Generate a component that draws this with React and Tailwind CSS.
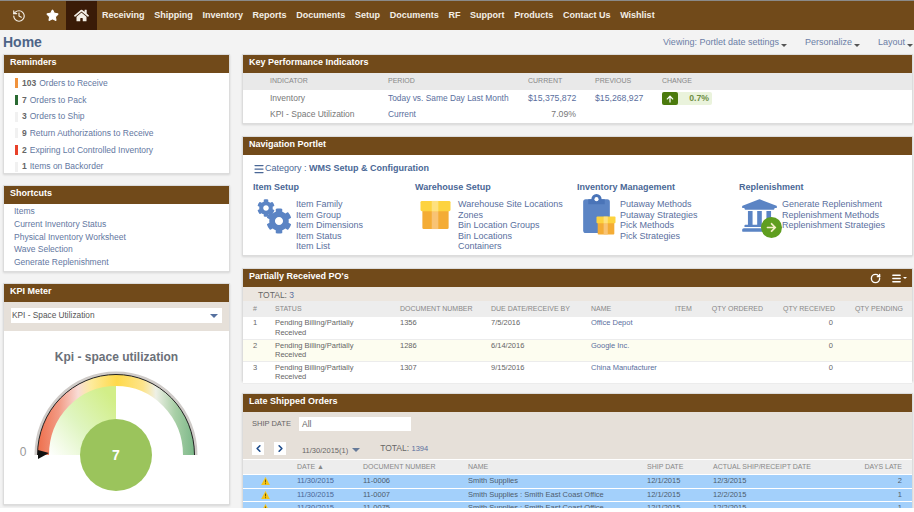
import { History, Star, RotateCw, Menu, ChevronLeft, ChevronRight } from "lucide-react";
import { FaHome, FaCog, FaUniversity, FaArrowUp, FaArrowRight } from "react-icons/fa";

const navItems = ["Receiving", "Shipping", "Inventory", "Reports", "Documents", "Setup", "Documents", "RF", "Support", "Products", "Contact Us", "Wishlist"];

const reminders = [
  { count: 103, label: "Orders to Receive", bar: "bg-[#f0923c]" },
  { count: 7, label: "Orders to Pack", bar: "bg-[#2a6a32]" },
  { count: 3, label: "Orders to Ship", bar: "bg-[#f1f1f1]" },
  { count: 9, label: "Return Authorizations to Receive", bar: "bg-[#f1f1f1]" },
  { count: 2, label: "Expiring Lot Controlled Inventory", bar: "bg-[#e8412a]" },
  { count: 1, label: "Items on Backorder", bar: "bg-[#f1f1f1]" },
];

const shortcuts = ["Items", "Current Inventory Status", "Physical Inventory Worksheet", "Wave Selection", "Generate Replenishment"];

const poRows = [
  { id: 1, doc: "1356", due: "7/5/2016", name: "Office Depot", bg: "bg-white" },
  { id: 2, doc: "1286", due: "6/14/2016", name: "Google Inc.", bg: "bg-[#fdfdf0]" },
  { id: 3, doc: "1307", due: "9/15/2016", name: "China Manufacturer", bg: "bg-white" },
];

const lateRows = [
  { doc: "11-0006", name: "Smith Supplies", ship: "12/1/2015", actual: "12/3/2015", days: 2 },
  { doc: "11-0007", name: "Smith Supplies : Smith East Coast Office", ship: "12/1/2015", actual: "12/2/2015", days: 1 },
  { doc: "11-0075", name: "Smith Supplies : Smith East Coast Office", ship: "12/1/2015", actual: "12/2/2015", days: 1 },
];

function Panel({ title, right, className = "", children }) {
  return (
    <section className={`border border-[#dcdcdc] bg-white shadow-[0_1px_2px_rgba(0,0,0,0.12)] ${className}`}>
      <div className="flex h-[18px] items-center justify-between bg-[#714a1a] pb-[2px] pl-[6px] pr-[4px] text-[9px] font-bold text-white">
        <span>{title}</span>
        {right}
      </div>
      {children}
    </section>
  );
}

function Box({ className = "" }) {
  return (
    <svg viewBox="0 0 32 32" className={className}>
      <rect x="2" y="10" width="28" height="21" rx="1.5" fill="#f4ac35" />
      <rect x="12" y="10" width="7" height="21" fill="#f8c374" />
      <rect x="0" y="1" width="32" height="11" rx="1.5" fill="#fdd33f" />
      <rect x="12" y="1" width="7" height="11" fill="#fee17f" />
    </svg>
  );
}

function NavGroup({ title, icon, links, width }) {
  return (
    <div className={width}>
      <p className="text-[9px] font-bold text-[#4a6796]">{title}</p>
      <div className="mt-[5px] flex">
        <div className="w-[43px] shrink-0">{icon}</div>
        <ul className="text-[9px] leading-[10.5px] text-[#5a6f9e]">
          {links.map((l) => (
            <li key={l} className="whitespace-nowrap">{l}</li>
          ))}
        </ul>
      </div>
    </div>
  );
}

function Gauge() {
  return (
    <svg viewBox="3 33 226 150" className="block h-[150px] w-[226px]">
      <defs>
        <linearGradient id="band" gradientUnits="userSpaceOnUse" x1="35" y1="0" x2="197" y2="0">
          <stop offset="0" stopColor="#ee6c48" />
          <stop offset="0.14" stopColor="#f29a84" />
          <stop offset="0.26" stopColor="#f9dcd6" />
          <stop offset="0.34" stopColor="#fdeb9c" />
          <stop offset="0.5" stopColor="#ffd94a" />
          <stop offset="0.66" stopColor="#fde48a" />
          <stop offset="0.74" stopColor="#eef0e6" />
          <stop offset="0.86" stopColor="#a8cfa6" />
          <stop offset="1" stopColor="#73b383" />
        </linearGradient>
        <linearGradient id="wedge" gradientUnits="userSpaceOnUse" x1="50" y1="125" x2="115" y2="70">
          <stop offset="0" stopColor="#ffffff" />
          <stop offset="0.5" stopColor="#dff5c0" />
          <stop offset="1" stopColor="#d2ee88" />
        </linearGradient>
      </defs>
      <path d="M115 122 L47 122 A68 70 0 0 1 115 52 Z" fill="url(#wedge)" />
      <path d="M42 122 A73 75 0 0 1 188 122" fill="none" stroke="url(#band)" strokeWidth="12" />
      <path d="M35 122 A80 82 0 0 1 195 122" fill="none" stroke="#cfcbc8" strokeWidth="3" />
      <path d="M36.500 122 A78.500 80.500 0 0 1 193.500 122" fill="none" stroke="#222" strokeWidth="1" />
      <path d="M36 125 L47 119 L36 116 Z" fill="#111" transform="translate(1 1)" />
      <circle cx="115" cy="122" r="36" fill="#9bc45c" />
      <text x="115" y="127" textAnchor="middle" fontSize="14" fontWeight="700" fill="#fff">7</text>
      <text x="22" y="123" textAnchor="middle" fontSize="12" fill="#999">0</text>
    </svg>
  );
}

export default function App() {
  return (
    <div className="h-[508px] overflow-hidden bg-[#f3f3f3] font-['Liberation_Sans',Arial,sans-serif] text-[#666]">
      <nav className="flex h-[30px] items-center border-t border-[#8a8a8a] bg-[#714a1a] text-[9px] font-bold text-[#f4efe6]">
        <span className="flex h-full w-[38px] items-center justify-center"><History size={14} strokeWidth={2} /></span>
        <span className="flex h-full w-[28px] items-center justify-center"><Star size={13} fill="white" stroke="white" /></span>
        <span className="flex h-full w-[31px] items-center justify-center bg-[#3a1b07]"><FaHome size={15} className="text-[#f4efe6]" /></span>
        <ul className="ml-[5px] flex gap-[9.700px]">
          {navItems.map((n, i) => (
            <li key={n + i} className="whitespace-nowrap">{n}</li>
          ))}
        </ul>
      </nav>

      <header className="flex h-[24px] items-center justify-between pl-[3px] pr-[1px]">
        <h1 className="text-[14px] font-bold text-[#4d6487]">Home</h1>
        <div className="mt-[2px] flex gap-[18px] text-[9px] text-[#6b7ea6]">
          <span>Viewing: Portlet date settings<Caret /></span>
          <span>Personalize<Caret /></span>
          <span>Layout<Caret /></span>
        </div>
      </header>

      <main className="flex gap-[12px] pl-[3px] pr-[1px]">
        <div className="flex w-[227px] shrink-0 flex-col gap-[11px]">
          <Panel title="Reminders" className="h-[120px]">
            <ul className="pl-[11px] pt-[2px]">
              {reminders.map((r) => (
                <li key={r.label} className="flex h-[16.7px] items-center text-[8.500px]">
                  <span className={`mr-[4px] h-[10px] w-[3px] ${r.bar}`} />
                  <b className="mr-[3px] text-[#666]">{r.count}</b>
                  <span className="text-[#63779f]">{r.label}</span>
                </li>
              ))}
            </ul>
          </Panel>
          <Panel title="Shortcuts" className="h-[87px]">
            <ul className="pl-[10px] pt-[1px]">
              {shortcuts.map((s) => (
                <li key={s} className="flex h-[12.800px] items-center text-[8.500px] text-[#63779f]">{s}</li>
              ))}
            </ul>
          </Panel>
          <Panel title="KPI Meter" className="h-[222px]">
            <div className="h-[29px] bg-[#e6e0d9] px-[7px] pt-[6px]">
              <div className="flex h-[15px] items-center justify-between bg-white pl-[1px] pr-[4px] text-[8.300px] text-[#555]">
                KPI - Space Utilization
                <span className="h-0 w-0 border-x-[4px] border-t-[4px] border-x-transparent border-t-[#55709f]" />
              </div>
            </div>
            <p className="mt-[17px] text-center text-[12px] font-bold text-[#6b7078]">Kpi - space utilization</p>
            <Gauge />
          </Panel>
        </div>

        <div className="flex min-w-0 flex-1 flex-col gap-[12px]">
          <Panel title="Key Performance Indicators" className="h-[70px]">
            <table className="w-full table-fixed text-[8.700px]">
              <colgroup>
                <col className="w-[145px]" />
                <col className="w-[140px]" />
                <col className="w-[67px]" />
                <col className="w-[67px]" />
                <col />
              </colgroup>
              <thead>
                <tr className="h-[17px] bg-[#e9e9e9] text-left text-[7px] font-normal text-[#888]">
                  <th className="pl-[27px] font-normal">INDICATOR</th>
                  <th className="font-normal">PERIOD</th>
                  <th className="font-normal">CURRENT</th>
                  <th className="font-normal">PREVIOUS</th>
                  <th className="font-normal">CHANGE</th>
                </tr>
              </thead>
              <tbody>
                <tr className="h-[17px]">
                  <td className="pl-[27px] text-[8.500px] text-[#777]">Inventory</td>
                  <td className="whitespace-nowrap text-[8.400px] text-[#5a6f9e]">Today vs. Same Day Last Month</td>
                  <td className="text-[#5a6f9e]">$15,375,872</td>
                  <td className="text-[#5a6f9e]">$15,268,927</td>
                  <td>
                    <div className="flex h-[13px] w-[50px] items-center rounded-[2px] bg-[#eaf3dc]">
                      <span className="flex h-full w-[16px] items-center justify-center rounded-[2px] bg-[#4b7a0d] text-white"><FaArrowUp size={8} /></span>
                      <span className="ml-auto mr-[3px] font-bold text-[#6e8f45]">0.7%</span>
                    </div>
                  </td>
                </tr>
                <tr className="h-[15px]">
                  <td className="pl-[27px] text-[8.500px] text-[#777]">KPI - Space Utilization</td>
                  <td className="text-[8.400px] text-[#5a6f9e]">Current</td>
                  <td className="pr-[19px] text-right text-[#777]">7.09%</td>
                  <td />
                  <td />
                </tr>
              </tbody>
            </table>
          </Panel>

          <Panel title="Navigation Portlet" className="h-[120px]">
            <div className="px-[10px] pt-[7px]">
              <p className="flex items-center text-[9px] font-bold text-[#4a6796]">
                <Menu size={12} strokeWidth={2.500} className="text-[#4a6796]" />
                <span className="font-normal">Category :&nbsp;</span>WMS Setup &amp; Configuration
              </p>
              <div className="mt-[5px] flex">
                <NavGroup
                  width="w-[162px]"
                  title="Item Setup"
                  links={["Item Family", "Item Group", "Item Dimensions", "Item Status", "Item List"]}
                  icon={
                    <div className="relative ml-[4px] h-[35px] w-[35px]">
                      <FaCog size={18} className="text-[#5b84c4]" />
                      <FaCog size={26} className="absolute bottom-0 right-0 text-[#5b84c4]" />
                    </div>
                  }
                />
                <NavGroup
                  width="w-[162px]"
                  title="Warehouse Setup"
                  links={["Warehouse Site Locations", "Zones", "Bin Location Groups", "Bin Locations", "Containers"]}
                  icon={<Box className="mt-[1px] ml-[5px] h-[30px] w-[31px]" />}
                />
                <NavGroup
                  width="w-[162px]"
                  title="Inventory Management"
                  links={["Putaway Methods", "Putaway Strategies", "Pick Methods", "Pick Strategies"]}
                  icon={
                    <div className="relative ml-[6px] mt-[-5px] h-[41px] w-[34px]">
                      <svg viewBox="0 0 26 38" className="h-[39px] w-[27px]">
                        <rect x="0" y="5" width="26" height="33" rx="2.500" fill="#5b84c4" />
                        <path d="M8 5 a5 5 0 0 1 10 0 h3 v5 H5 V5 Z" fill="#4a74b8" />
                        <circle cx="13" cy="5" r="2" fill="#fff" />
                      </svg>
                      <Box className="absolute bottom-0 right-0 h-[19px] w-[22px]" />
                    </div>
                  }
                />
                <NavGroup
                  width="w-[150px]"
                  title="Replenishment"
                  links={["Generate Replenishment", "Replenishment Methods", "Replenishment Strategies"]}
                  icon={
                    <div className="relative ml-[2px] mt-[-2px] h-[40px] w-[38px]">
                      <FaUniversity size={37} className="text-[#5b84c4]" />
                      <span className="absolute bottom-[-1px] right-[-3px] flex h-[21px] w-[21px] items-center justify-center rounded-full bg-[#5f9e1f] text-[#f5f0c8]"><FaArrowRight size={11} /></span>
                    </div>
                  }
                />
              </div>
            </div>
          </Panel>

          <Panel
            title="Partially Received PO's"
            className="h-[113px]"
            right={
              <span className="mt-[2px] flex items-center gap-[10px] pr-[1px]">
                <RotateCw size={11} strokeWidth={3} />
                <span className="flex items-center"><Menu size={11} strokeWidth={3} /><span className="ml-[1px] h-0 w-0 border-x-[2px] border-t-[2px] border-x-transparent border-t-white" /></span>
              </span>
            }
          >
            <div className="flex h-[14px] items-center bg-[#ece6df] pl-[15px] pt-[2px] text-[8.500px] text-[#666]">
              TOTAL:&nbsp;<span className="text-[#5a6f9e]">3</span>
            </div>
            <table className="w-full table-fixed text-[7.500px] leading-[9.500px]">
              <colgroup>
                <col className="w-[32px]" />
                <col className="w-[125px]" />
                <col className="w-[91px]" />
                <col className="w-[100px]" />
                <col className="w-[84px]" />
                <col className="w-[36px]" />
                <col className="w-[71px]" />
                <col className="w-[72px]" />
                <col />
              </colgroup>
              <thead>
                <tr className="h-[16px] bg-[#ededed] text-left text-[7px] text-[#888]">
                  <th className="pl-[10px] font-normal">#</th>
                  <th className="font-normal">STATUS</th>
                  <th className="font-normal">DOCUMENT NUMBER</th>
                  <th className="font-normal">DUE DATE/RECEIVE BY</th>
                  <th className="font-normal">NAME</th>
                  <th className="font-normal">ITEM</th>
                  <th className="pr-[19px] text-right font-normal">QTY ORDERED</th>
                  <th className="pr-[19px] text-right font-normal">QTY RECEIVED</th>
                  <th className="pr-[9px] text-right font-normal">QTY PENDING</th>
                </tr>
              </thead>
              <tbody>
                {poRows.map((r) => (
                  <tr key={r.id} className={`h-[22px] border-b border-[#ececec] align-top ${r.bg}`}>
                    <td className="pl-[10px] pt-[1px]">{r.id}</td>
                    <td className="pt-[1px] pr-[20px]">Pending Billing/Partially Received</td>
                    <td className="pt-[1px]">{r.doc}</td>
                    <td className="pt-[1px]">{r.due}</td>
                    <td className="pt-[1px] whitespace-nowrap text-[#5a6f9e]">{r.name}</td>
                    <td />
                    <td />
                    <td className="pr-[21px] pt-[1px] text-right">0</td>
                    <td />
                  </tr>
                ))}
              </tbody>
            </table>
          </Panel>

          <Panel title="Late Shipped Orders" className="h-[200px]">
            <div className="h-[47px] bg-[#e6e0d9] pl-[9px] pt-[5px] text-[7.500px]">
              <div className="flex items-center">
                <span className="w-[47px] text-[#666]">SHIP DATE</span>
                <span className="flex h-[14px] w-[112px] items-center bg-white pl-[3px] text-[8.500px]">All</span>
              </div>
              <div className="mt-[10px] flex items-center">
                <span className="flex h-[13px] w-[12px] items-center justify-center bg-white text-[#1f4d8c]"><ChevronLeft size={11} strokeWidth={3.500} /></span>
                <span className="ml-[10px] flex h-[13px] w-[12px] items-center justify-center bg-white text-[#1f4d8c]"><ChevronRight size={11} strokeWidth={3.500} /></span>
                <span className="ml-[16px] mt-[4px]">11/30/2015(1)</span>
                <span className="ml-[4px] mt-[3px] h-0 w-0 border-x-[4px] border-t-[4px] border-x-transparent border-t-[#667a99]" />
                <span className="ml-[20px] text-[8.500px]">TOTAL:&nbsp;<span className="text-[7.500px] text-[#5a6f9e]">1394</span></span>
              </div>
            </div>
            <table className="w-full table-fixed border-separate border-spacing-y-[1px] text-[7.500px] text-[#4e5c6c]">
              <colgroup>
                <col className="w-[54px]" />
                <col className="w-[66px]" />
                <col className="w-[105px]" />
                <col className="w-[179px]" />
                <col className="w-[66px]" />
                <col className="w-[150px]" />
                <col />
              </colgroup>
              <thead>
                <tr className="h-[14px] bg-[#ededed] text-left text-[7px] text-[#888]">
                  <th />
                  <th className="font-normal">DATE ▲</th>
                  <th className="font-normal">DOCUMENT NUMBER</th>
                  <th className="font-normal">NAME</th>
                  <th className="font-normal">SHIP DATE</th>
                  <th className="font-normal">ACTUAL SHIP/RECEIPT DATE</th>
                  <th className="pr-[10px] text-right font-normal">DAYS LATE</th>
                </tr>
              </thead>
              <tbody>
                {lateRows.map((r) => (
                  <tr key={r.doc} className="h-[12.500px] bg-[#a3d0fb] leading-[12px]">
                    <td className="pl-[18px]"><Warn /></td>
                    <td className="text-[#4a6796]">11/30/2015</td>
                    <td>{r.doc}</td>
                    <td className="whitespace-nowrap">{r.name}</td>
                    <td>{r.ship}</td>
                    <td>{r.actual}</td>
                    <td className="pr-[10px] text-right">{r.days}</td>
                  </tr>
                ))}
              </tbody>
            </table>
          </Panel>
        </div>
      </main>
    </div>
  );
}

function Caret() {
  return <span className="ml-[2px] inline-block h-0 w-0 border-x-[3px] border-t-[3px] border-x-transparent border-t-[#555] align-[-2px]" />;
}

function Warn() {
  return (
    <svg viewBox="0 0 12 11" className="block h-[8px] w-[9px]">
      <path d="M6 0 L12 11 H0 Z" fill="#f5c518" />
      <rect x="5.300" y="3.500" width="1.400" height="4" fill="#7a5a00" />
      <rect x="5.300" y="8.500" width="1.400" height="1.400" fill="#7a5a00" />
    </svg>
  );
}
